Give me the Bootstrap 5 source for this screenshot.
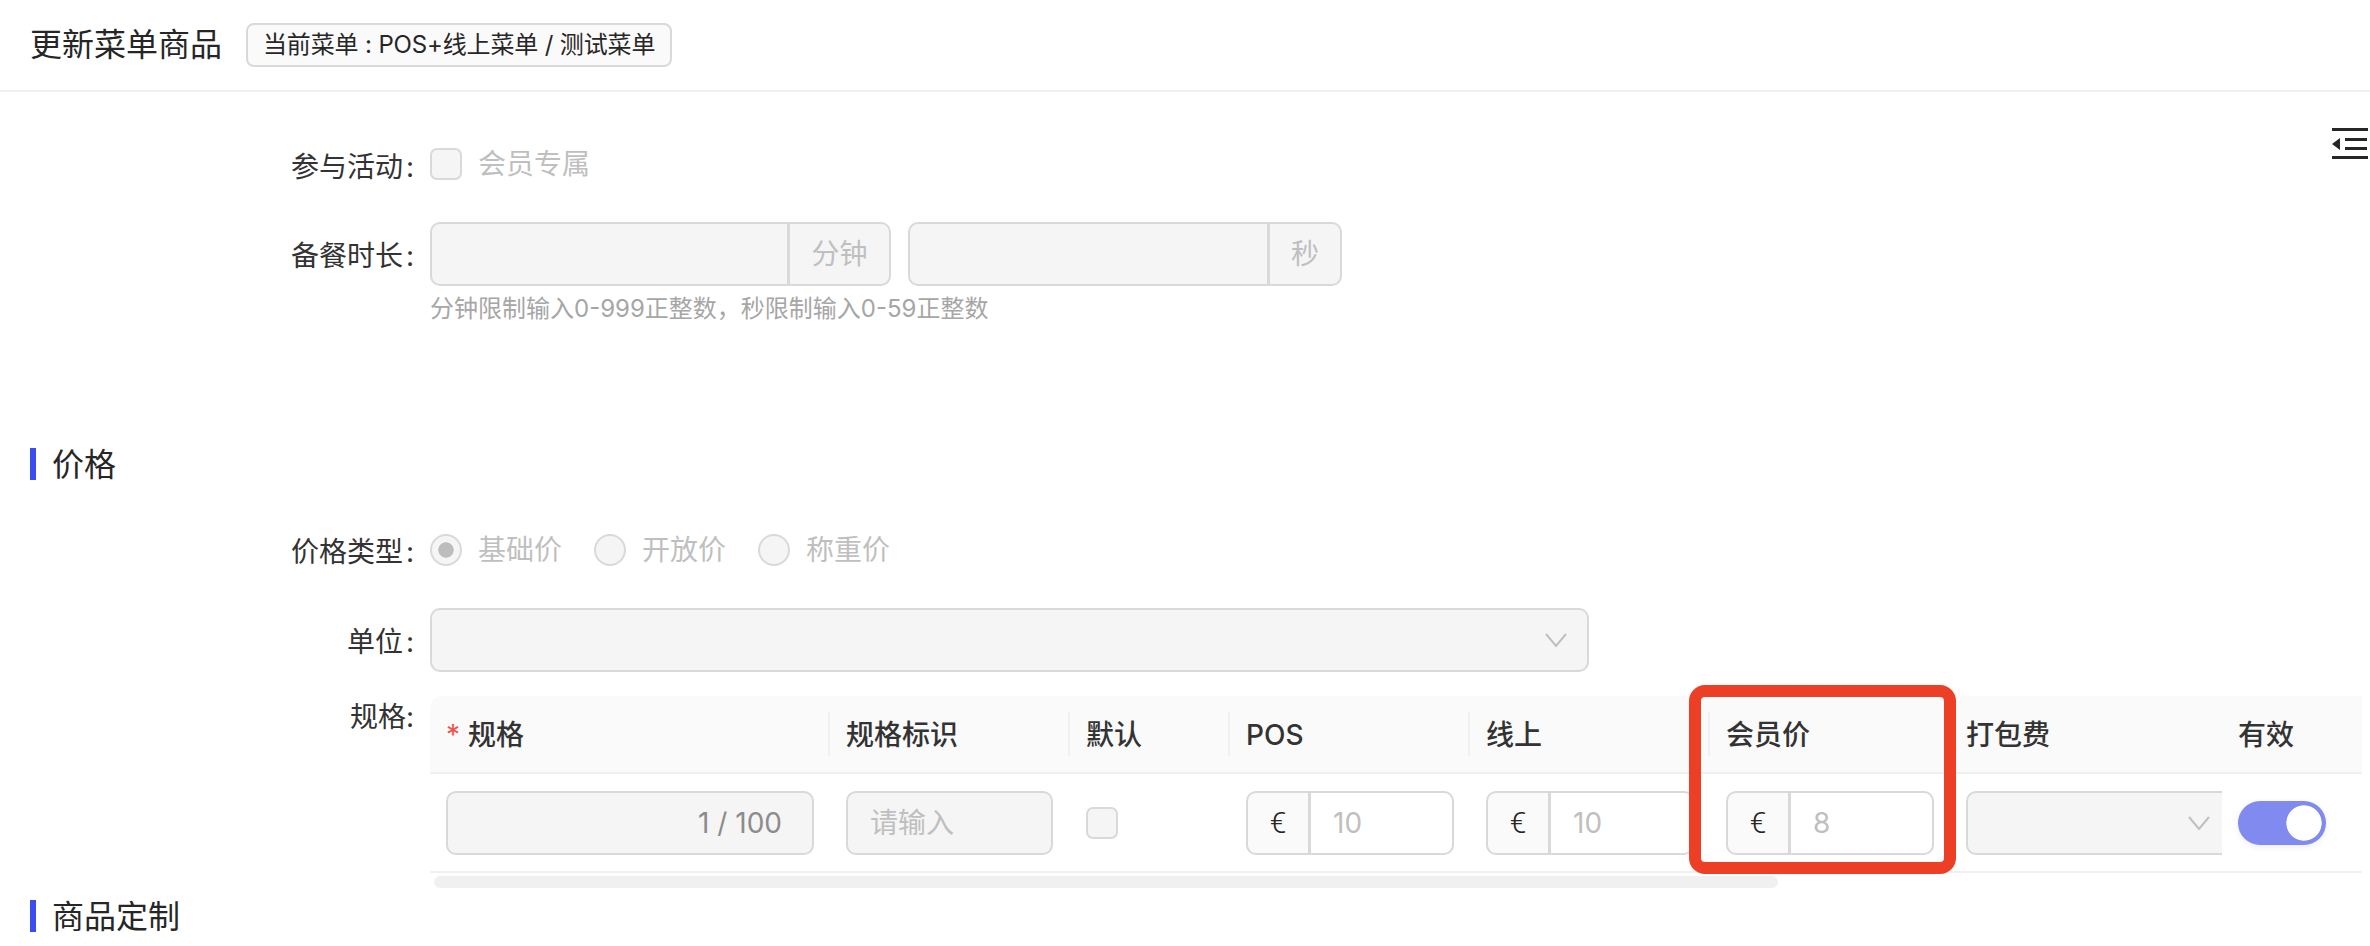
<!DOCTYPE html>
<html lang="zh">
<head>
<meta charset="utf-8">
<title>更新菜单商品</title>
<link href="https://cdn.jsdelivr.net/npm/bootstrap@5.3.0/dist/css/bootstrap.min.css" rel="stylesheet">
<style>
html,body{height:946px;overflow:hidden}
body{font-family:Inter,"Noto Sans CJK SC",sans-serif;font-size:28px;line-height:36px;color:#333;background:#fff}
.page-head{height:92px;padding-left:30px;border-bottom:2px solid #f0f0f0;gap:24px}
.page-title{font-size:32px;line-height:44px;color:#262626}
.menu-tag{height:44px;padding:0 15px;font-size:24px;line-height:40px;letter-spacing:-.15px;color:#262626;background:#fafafa;border:2px solid #d9d9d9;border-radius:8px}
.main-area{position:relative;display:flow-root}
.outdent-icon{position:absolute;top:36px;right:2px;width:36px;height:32px}
.f-label{width:414px;margin-right:16px;flex:none;text-align:right;color:#333;padding-top:3px}
.f-colon{margin-left:3px}
.f-row-a{margin-top:56px;height:32px}
.f-row-a .f-label{padding-top:5px}
.f-row-b{margin-top:42px}
.f-row-c{margin-top:54px;height:32px}
.f-row-d{margin-top:42px}
.f-row-e{margin-top:24px}
.gray-text{color:#bfbfbf}
.tick{width:32px;height:32px;margin:0;background-color:#f5f5f5;border:2px solid #d9d9d9;border-radius:6px;opacity:1!important;flex:none}
.tick.form-check-input[type=radio]{border-radius:50%}
.tick.form-check-input[type=radio]:checked{background-color:#f5f5f5;border-color:#d9d9d9;background-image:radial-gradient(circle 8px at center,#bdbdbd 92%,transparent 100%)}
.opt-text{margin-left:16px;margin-right:32px}
.time-group{width:461px;height:64px;flex-wrap:nowrap}
.time-group.sec-g{width:434px;margin-left:17px}
.time-group .form-control,.spec-group .form-control{height:64px;font-size:28px;padding:0 16px;border:2px solid #d9d9d9;border-radius:10px;color:#bfbfbf;background:#f5f5f5;box-shadow:none}
.time-group .input-group-text{height:64px;font-size:28px;padding:0 24px;width:103px;justify-content:center;color:#bfbfbf;background:#f5f5f5;border:2px solid #d9d9d9;border-radius:10px}
.time-group.sec-g .input-group-text{width:74px;padding:0}
.f-hint{font-size:24px;line-height:36px;margin:5px 0 0 430px;color:#a6a6a6}
.sec-head{height:32px;font-size:32px;line-height:32px;color:#262626;margin-left:30px}
.sec-name{padding-top:2px}
.sec-bar{width:6px;height:32px;margin-right:16px;background:#3c4cf0}
.sec-one{margin-top:121px}
.sec-two{margin-top:12px}
.sel-box{height:64px;width:1159px;padding:0 20px 0 0;background:#f5f5f5;border:2px solid #d9d9d9;border-radius:10px;justify-content:flex-end}
.sel-arrow{width:22px;height:14px}
.spec-wrap{width:1932px}
.spec-table{table-layout:fixed;width:1932px;margin:0;--bs-table-bg:transparent;border-collapse:separate;border-spacing:0}
.spec-table th{height:78px;padding:2px 16px 0 16px;font-size:28px;line-height:36px;font-weight:500;color:#333;background:#fafafa;border-bottom:2px solid #f0f0f0;vertical-align:middle;position:relative}
.spec-table th:first-child{border-top-left-radius:12px}
.spec-table th:not(:last-child):not(:nth-child(7))::after{content:"";position:absolute;right:0;top:16px;height:44px;width:2px;background:#f0f0f0}
.spec-table td{height:99px;padding:0 16px;border-bottom:2px solid #f0f0f0;vertical-align:middle;overflow:hidden}
.req-star{color:#ef5350;margin-right:8px;font-weight:400;font-size:28px}
.dis-input{height:64px;background:#f5f5f5;border:2px solid #d9d9d9;border-radius:10px;font-size:28px;color:#bfbfbf;padding:0 22px;display:flex;align-items:center}
.count-text{color:#8c8c8c;margin-left:auto;padding-right:8px}
.spec-group{height:64px;width:208px;flex-wrap:nowrap}
.spec-group .input-group-text{height:64px;width:64px;justify-content:center;padding:0;font-family:Roboto,sans-serif;font-weight:300;font-size:30px;color:#262626;background:#fafafa;border:2px solid #d9d9d9;border-radius:10px}
.spec-group .form-control{background:#fff;padding-left:22px;min-width:0}
.spec-group .form-control::placeholder,.ph-in::placeholder{color:#bfbfbf;opacity:1}
.ph-in.form-control{height:64px;font-size:28px;padding:0 22px;background:#f5f5f5;border:2px solid #d9d9d9;border-radius:10px;width:207px;box-shadow:none}
.pack-sel{width:267px;height:64px;background:#f5f5f5;border:2px solid #d9d9d9;border-right:0;border-radius:10px 0 0 10px;padding-right:23px;justify-content:flex-end}
.pack-td{padding-right:0!important}
.fix-cell{position:relative;z-index:1;box-shadow:-8px 0 12px -6px rgba(0,0,0,.07)}
.spec-table td.fix-cell{overflow:visible;background:#fff}
.flat-switch{padding:0;min-height:0;margin:0;line-height:0}
.flat-switch .form-check-input{width:88px;height:44px;margin:0;border:0;opacity:1;float:none;background-color:#818aef;border-radius:22px;background-position:0 0;background-size:auto;background-image:radial-gradient(circle 18px at 66px 22px,#fff 96%,transparent 100%);box-shadow:0 2px 6px rgba(0,0,0,.08)}
.scroll-thumb{width:1344px;height:12px;margin:3px 0 0 4px;background:#f0f0f0;border-radius:6px}
.red-frame{position:absolute;left:1689px;top:593px;width:267px;height:189px;border:12px solid #ec3f26;border-radius:16px;pointer-events:none;z-index:2}
</style>
</head>
<body>
<header class="page-head d-flex align-items-center">
  <span class="page-title">更新菜单商品</span>
  <span class="menu-tag">当前菜单 : POS+线上菜单 / 测试菜单</span>
</header>
<main class="main-area">
  <svg class="outdent-icon" viewBox="0 0 36 32" aria-hidden="true">
    <path fill="#262626" d="M0 0h36v3H0zM13 10h22v3H13zM13 19h22v3H13zM0 28h36v3H0zM0 16l8-6v12z"/>
  </svg>

  <div class="f-row-a d-flex align-items-center">
    <div class="f-label">参与活动<span class="f-colon">:</span></div>
    <input class="form-check-input tick" type="checkbox" disabled>
    <span class="opt-text gray-text">会员专属</span>
  </div>

  <div class="f-row-b d-flex align-items-center">
    <div class="f-label">备餐时长<span class="f-colon">:</span></div>
    <div class="input-group time-group">
      <input class="form-control" type="text" disabled>
      <span class="input-group-text">分钟</span>
    </div>
    <div class="input-group time-group sec-g">
      <input class="form-control" type="text" disabled>
      <span class="input-group-text">秒</span>
    </div>
  </div>
  <div class="f-hint">分钟限制输入0-999正整数，秒限制输入0-59正整数</div>

  <div class="sec-head sec-one d-flex align-items-center"><span class="sec-bar"></span><span class="sec-name">价格</span></div>

  <div class="f-row-c d-flex align-items-center">
    <div class="f-label">价格类型<span class="f-colon">:</span></div>
    <input class="form-check-input tick" type="radio" name="ptype" checked disabled>
    <span class="opt-text gray-text">基础价</span>
    <input class="form-check-input tick" type="radio" name="ptype" disabled>
    <span class="opt-text gray-text">开放价</span>
    <input class="form-check-input tick" type="radio" name="ptype" disabled>
    <span class="opt-text gray-text">称重价</span>
  </div>

  <div class="f-row-d d-flex align-items-center">
    <div class="f-label">单位<span class="f-colon">:</span></div>
    <div class="sel-box d-flex align-items-center">
      <svg class="sel-arrow" viewBox="0 0 22 14" aria-hidden="true"><path d="M1 1l10 12L21 1" fill="none" stroke="#bfbfbf" stroke-width="2"/></svg>
    </div>
  </div>

  <div class="f-row-e d-flex">
    <div class="f-label">规格:</div>
    <div class="spec-wrap">
      <table class="table spec-table">
        <colgroup><col style="width:400px"><col style="width:240px"><col style="width:160px"><col style="width:240px"><col style="width:240px"><col style="width:240px"><col style="width:272px"><col style="width:140px"></colgroup>
        <thead>
          <tr>
            <th><span class="req-star">*</span>规格</th>
            <th>规格标识</th>
            <th>默认</th>
            <th>POS</th>
            <th>线上</th>
            <th>会员价</th>
            <th>打包费</th>
            <th class="fix-cell">有效</th>
          </tr>
        </thead>
        <tbody>
          <tr>
            <td><div class="dis-input"><span class="count-text">1 / 100</span></div></td>
            <td><input class="form-control ph-in" type="text" placeholder="请输入" disabled></td>
            <td><input class="form-check-input tick d-block" type="checkbox" disabled></td>
            <td><div class="input-group spec-group"><span class="input-group-text">€</span><input class="form-control" type="text" placeholder="10" disabled></div></td>
            <td><div class="input-group spec-group"><span class="input-group-text">€</span><input class="form-control" type="text" placeholder="10" disabled></div></td>
            <td><div class="input-group spec-group"><span class="input-group-text">€</span><input class="form-control" type="text" placeholder="8" disabled></div></td>
            <td class="pack-td"><div class="pack-sel d-flex align-items-center"><svg class="sel-arrow" viewBox="0 0 22 14" aria-hidden="true"><path d="M1 1l10 12L21 1" fill="none" stroke="#bfbfbf" stroke-width="2"/></svg></div></td>
            <td class="fix-cell"><div class="form-check form-switch flat-switch"><input class="form-check-input" type="checkbox" role="switch" checked disabled></div></td>
          </tr>
        </tbody>
      </table>
      <div class="scroll-thumb"></div>
    </div>
  </div>

  <div class="sec-head sec-two d-flex align-items-center"><span class="sec-bar"></span><span class="sec-name">商品定制</span></div>

  <div class="red-frame"></div>
</main>
<script src="https://cdn.jsdelivr.net/npm/bootstrap@5.3.0/dist/js/bootstrap.bundle.min.js"></script>
</body>
</html>
